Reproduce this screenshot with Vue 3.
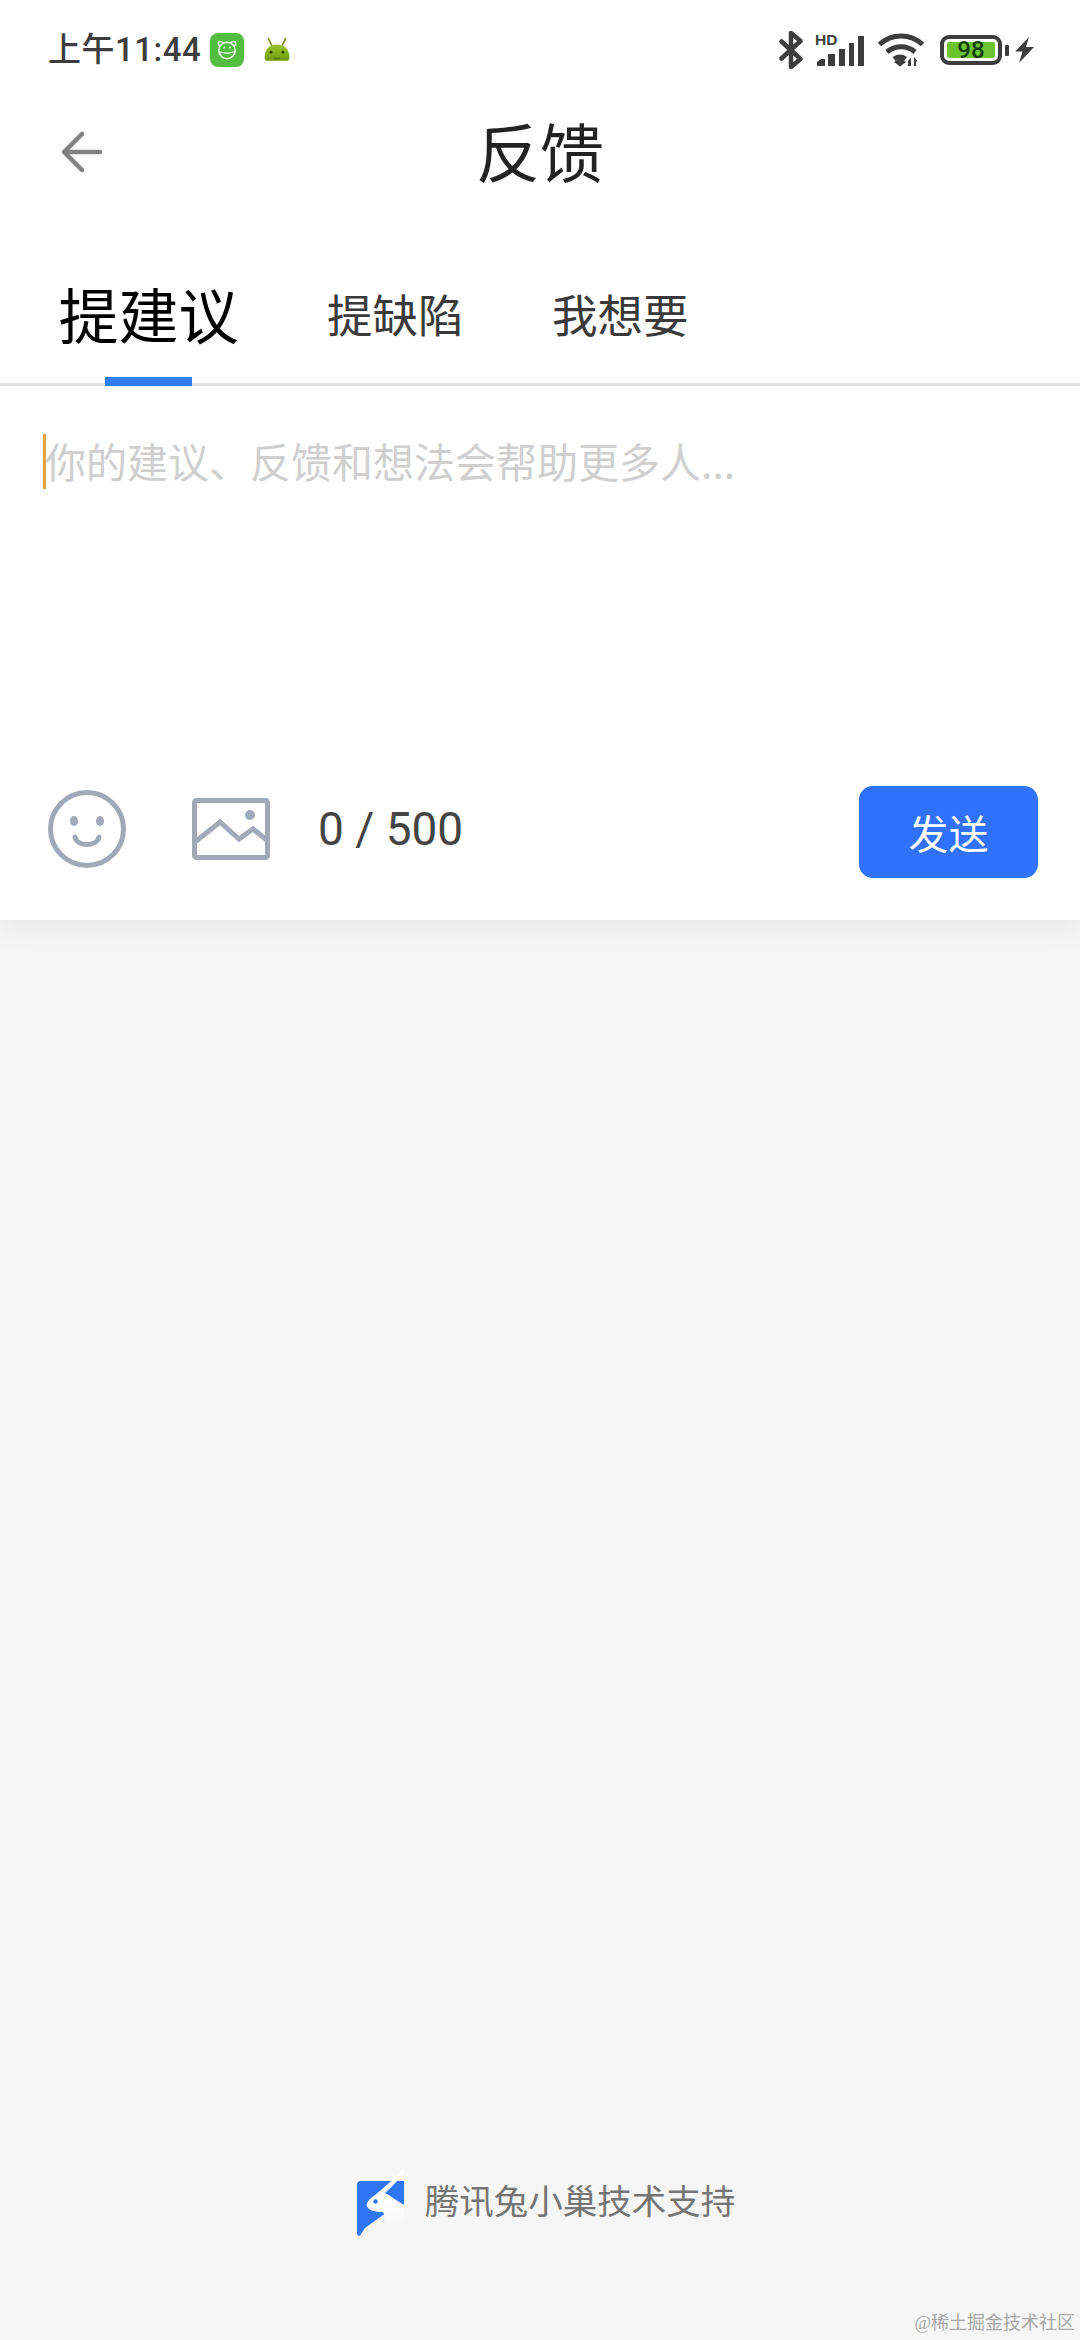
<template>
  <div class="page">
    <section class="card">
      <div class="status-bar">
        <div class="status-left">
          <span class="clock">上午11:44</span>
          <svg class="app-icon" width="34" height="34" viewBox="0 0 34 34">
            <rect width="34" height="34" rx="8" fill="#52bd3f" />
            <circle cx="10.500" cy="10.500" r="2.200" fill="none" stroke="#fff" stroke-width="1.300" />
            <circle cx="23.500" cy="10.500" r="2.200" fill="none" stroke="#fff" stroke-width="1.300" />
            <circle cx="17" cy="17.500" r="8.200" fill="#52bd3f" stroke="#fff" stroke-width="1.400" />
            <path d="M9 18.500c5 2 11 2 16 0" fill="none" stroke="#fff" stroke-width="1.300" />
            <circle cx="14" cy="14.500" r="1" fill="#fff" />
            <circle cx="20" cy="14.500" r="1" fill="#fff" />
          </svg>
          <svg class="droid" width="28" height="26" viewBox="0 0 26 24">
            <defs>
              <linearGradient id="droid-fill" x1="0" y1="0" x2="0" y2="1">
                <stop offset="0" stop-color="#9cc52b" />
                <stop offset="1" stop-color="#6b9a0d" />
              </linearGradient>
            </defs>
            <path d="M5 1.500l4 8M21 1.500l-4 8" stroke="#7d8f2a" stroke-width="1.600" stroke-linecap="round" />
            <path d="M1.500 19C1.500 11 6.500 7 13 7s11.500 4 11.500 12c0 2-.5 3-2.500 3H4c-2 0-2.500-1-2.500-3z" fill="url(#droid-fill)" />
            <circle cx="7.500" cy="14" r="1.300" fill="#2d3a08" />
            <circle cx="18.500" cy="14" r="1.300" fill="#2d3a08" />
            <path d="M10 19.500c2 .8 4 .8 6 0" fill="none" stroke="#4f700a" stroke-width="1" />
          </svg>
        </div>
        <div class="status-right">
          <svg width="24" height="38" viewBox="0 0 24 38" fill="none" stroke="#3d3d3d" stroke-width="4.500" stroke-linejoin="round" stroke-linecap="round">
            <path d="M2.500 10.500l19 17.500-9.500 8V2l9.500 8-19 17.500" />
          </svg>
          <div class="signal">
            <span class="hd">HD</span>
            <svg width="47" height="31" viewBox="0 0 47 31" fill="#3d3d3d">
              <path d="M0 27l4-3h4v7H0zM11 19h7v12h-7zM22 14h6v17h-6zM32 8h5v23h-5zM41 1h6v30h-6z" />
            </svg>
          </div>
          <svg width="46" height="34" viewBox="0 0 46 34" fill="none" stroke="#3d3d3d" stroke-width="5">
            <path d="M1.500 11.500c12-11.500 31-11.500 43 0M9 19c8-7 20-7 28 0M16 26c4-2.500 8-2.500 11.500 0" />
            <path d="M16 29l6-4 6 4-6 4.500z" fill="#3d3d3d" stroke="none" />
            <path d="M30 33v-5l3-3v8zM36 33v-9l3.500 4.500H38V33z" fill="#3d3d3d" stroke="none" />
          </svg>
          <div class="battery">
            <div class="battery-body"><span class="battery-level">98</span></div>
            <span class="battery-tip"></span>
          </div>
          <svg class="bolt" width="19" height="26" viewBox="0 0 19 26" fill="#3d3d3d">
            <path d="M14 0L0 14.500h7.500L4 26 19 10h-8z" />
          </svg>
        </div>
      </div>

      <header class="title-bar">
        <svg class="back" width="44" height="44" viewBox="0 0 44 44" fill="none" stroke="#808080" stroke-width="4.500" stroke-linecap="round" stroke-linejoin="round">
          <path d="M22 4L4 22l18 18M4 22h36" />
        </svg>
        <h1 class="title">反馈</h1>
      </header>

      <nav class="tabs">
        <button v-for="tab in tabs" :key="tab" class="tab" :class="{ active: tab === activeTab }">{{ tab }}</button>
      </nav>

      <div class="editor">
        <div class="input-line">
          <span class="caret"></span>
          <span class="placeholder">你的建议、反馈和想法会帮助更多人...</span>
        </div>
      </div>

      <div class="toolbar">
        <svg class="tool-smile" width="80" height="80" viewBox="0 0 80 80" fill="none" stroke="#a1a9b9" stroke-width="5">
          <circle cx="40" cy="40" r="36.500" />
          <ellipse cx="27" cy="32" rx="4" ry="5" fill="#a1a9b9" stroke="none" />
          <ellipse cx="53" cy="32" rx="4" ry="5" fill="#a1a9b9" stroke="none" />
          <path d="M28 48c2 10 22 10 24 0" stroke-linecap="round" />
        </svg>
        <svg class="tool-image" width="78" height="62" viewBox="0 0 78 62" fill="none" stroke="#a1a9b9" stroke-width="5">
          <rect x="2.500" y="2.500" width="73" height="57" rx="2" stroke-linejoin="round" />
          <path d="M3 44l25-20 19 17 14-10 15 12" />
          <circle cx="58" cy="17" r="5" fill="#a1a9b9" stroke="none" />
        </svg>
        <span class="count">0 / 500</span>
        <button class="send">发送</button>
      </div>
    </section>

    <footer class="support">
      <svg width="47" height="68" viewBox="0 0 47 68">
        <defs>
          <linearGradient id="rabbit-fill" x1="0" y1="0.5" x2="0" y2="1">
            <stop offset="0" stop-color="#fff" />
            <stop offset="1" stop-color="#f6f6f6" />
          </linearGradient>
        </defs>
        <path d="M4 13H47V47H26L8 60L3 67.500Q0 69 0 65V17Q0 13 4 13z" fill="#2f76f6" />
        <path d="M47 0C38 10 28 19 18 27C13 30 10 34 9.500 37C11 42 16 44 26 44C28 48 29 53 30 58H47V37C40 33 34 28 28 25C35 19 42 11 47 5z" fill="url(#rabbit-fill)" />
        <circle cx="18.500" cy="33.500" r="2.200" fill="#2f76f6" />
      </svg>
      <span>腾讯兔小巢技术支持</span>
    </footer>

    <span class="watermark">@稀土掘金技术社区</span>
  </div>
</template>

<script setup>
const tabs = ['提建议', '提缺陷', '我想要']
const activeTab = '提建议'
</script>

<style>
body {
  margin: 0;
}
</style>

<style scoped>
.page {
  position: relative;
  display: flex;
  flex-direction: column;
  width: 1080px;
  height: 2340px;
  overflow: hidden;
  background: #f6f6f6;
  font-family: "Noto Sans CJK SC", "Noto Sans", sans-serif;
}
.card {
  height: 920px;
  background: #fff;
  box-shadow: 0 6px 30px rgba(0, 0, 0, 0.07);
}
.status-bar {
  display: flex;
  justify-content: space-between;
  align-items: center;
  height: 100px;
  padding: 0 46px 0 48px;
}
.status-left,
.status-right {
  display: flex;
  align-items: center;
}
.clock {
  font: 500 33px/100px Roboto, "Noto Sans CJK SC", sans-serif;
  color: #3d3d3d;
  letter-spacing: 0.5px;
}
.app-icon {
  margin-left: 9px;
}
.droid {
  margin-left: 19px;
}
.status-right {
  gap: 14px;
}
.signal {
  position: relative;
  display: flex;
  width: 47px;
  height: 31px;
}
.hd {
  position: absolute;
  left: -2px;
  top: -2px;
  font: 700 15.500px/14px "Liberation Sans", sans-serif;
  color: #3d3d3d;
}
.battery {
  display: flex;
  align-items: center;
  gap: 3px;
  margin-left: 2px;
}
.battery-body {
  box-sizing: border-box;
  width: 62px;
  height: 30px;
  padding: 3px;
  border: 4px solid #3d3d3d;
  border-radius: 9px;
}
.battery-level {
  display: block;
  height: 100%;
  background: #6cc530;
  border-radius: 2px;
  font: 500 24px/16px Roboto, sans-serif;
  color: #123f0c;
  text-align: center;
}
.battery-tip {
  width: 4px;
  height: 11px;
  background: #3d3d3d;
  border-radius: 1px;
}
.bolt {
  margin-left: -8px;
}
.title-bar {
  display: flex;
  align-items: center;
  justify-content: center;
  position: relative;
  height: 104px;
}
.back {
  position: absolute;
  left: 60px;
  top: 30px;
}
.title {
  margin: 0;
  padding-bottom: 6px;
  font-size: 64px;
  line-height: 98px;
  font-weight: 400;
  color: #222;
}
.tabs {
  display: flex;
  align-items: center;
  gap: 88.500px;
  height: 179px;
  padding-left: 58.500px;
  border-bottom: 3px solid #dfdfdf;
}
.tab {
  position: relative;
  margin-top: 38px;
  padding: 0;
  border: 0;
  background: none;
  font-family: inherit;
  font-size: 45.500px;
  line-height: 70px;
  color: #3a3a3a;
}
.tab.active {
  font-size: 60px;
  color: #000;
}
.tab.active::after {
  content: "";
  position: absolute;
  left: 46.500px;
  bottom: -38.500px;
  width: 87px;
  height: 9px;
  background: #2f7cf6;
}
.editor {
  box-sizing: border-box;
  height: 378px;
  padding: 48px 0 0 43px;
}
.input-line {
  display: flex;
  align-items: flex-start;
  height: 55px;
}
.caret {
  width: 3px;
  height: 55px;
  background: #e5a23c;
}
.placeholder {
  margin-left: -1px;
  font-size: 41px;
  line-height: 52px;
  color: #cfcfcf;
}
.toolbar {
  display: flex;
  align-items: center;
  height: 130px;
  padding: 0 42px 0 47px;
}
.tool-image {
  margin-left: 65px;
}
.count {
  margin-left: 48px;
  font: 400 46px/60px Roboto, sans-serif;
  color: #444;
}
.send {
  width: 179px;
  height: 92px;
  margin-top: 6px;
  margin-left: auto;
  padding: 0;
  border: 0;
  border-radius: 14px;
  background: #3071fd;
  color: #fff;
  font-family: inherit;
  font-size: 40px;
}
.support {
  display: flex;
  align-items: flex-start;
  justify-content: center;
  gap: 21px;
  margin-top: auto;
  margin-bottom: 104px;
  padding-left: 12px;
  font-size: 34.500px;
  line-height: 62px;
  color: #757575;
}
.watermark {
  position: absolute;
  right: 5px;
  bottom: 2px;
  font: 18px/30px "Liberation Serif", "Noto Sans CJK SC", serif;
  color: #a8a8a8;
}
</style>
